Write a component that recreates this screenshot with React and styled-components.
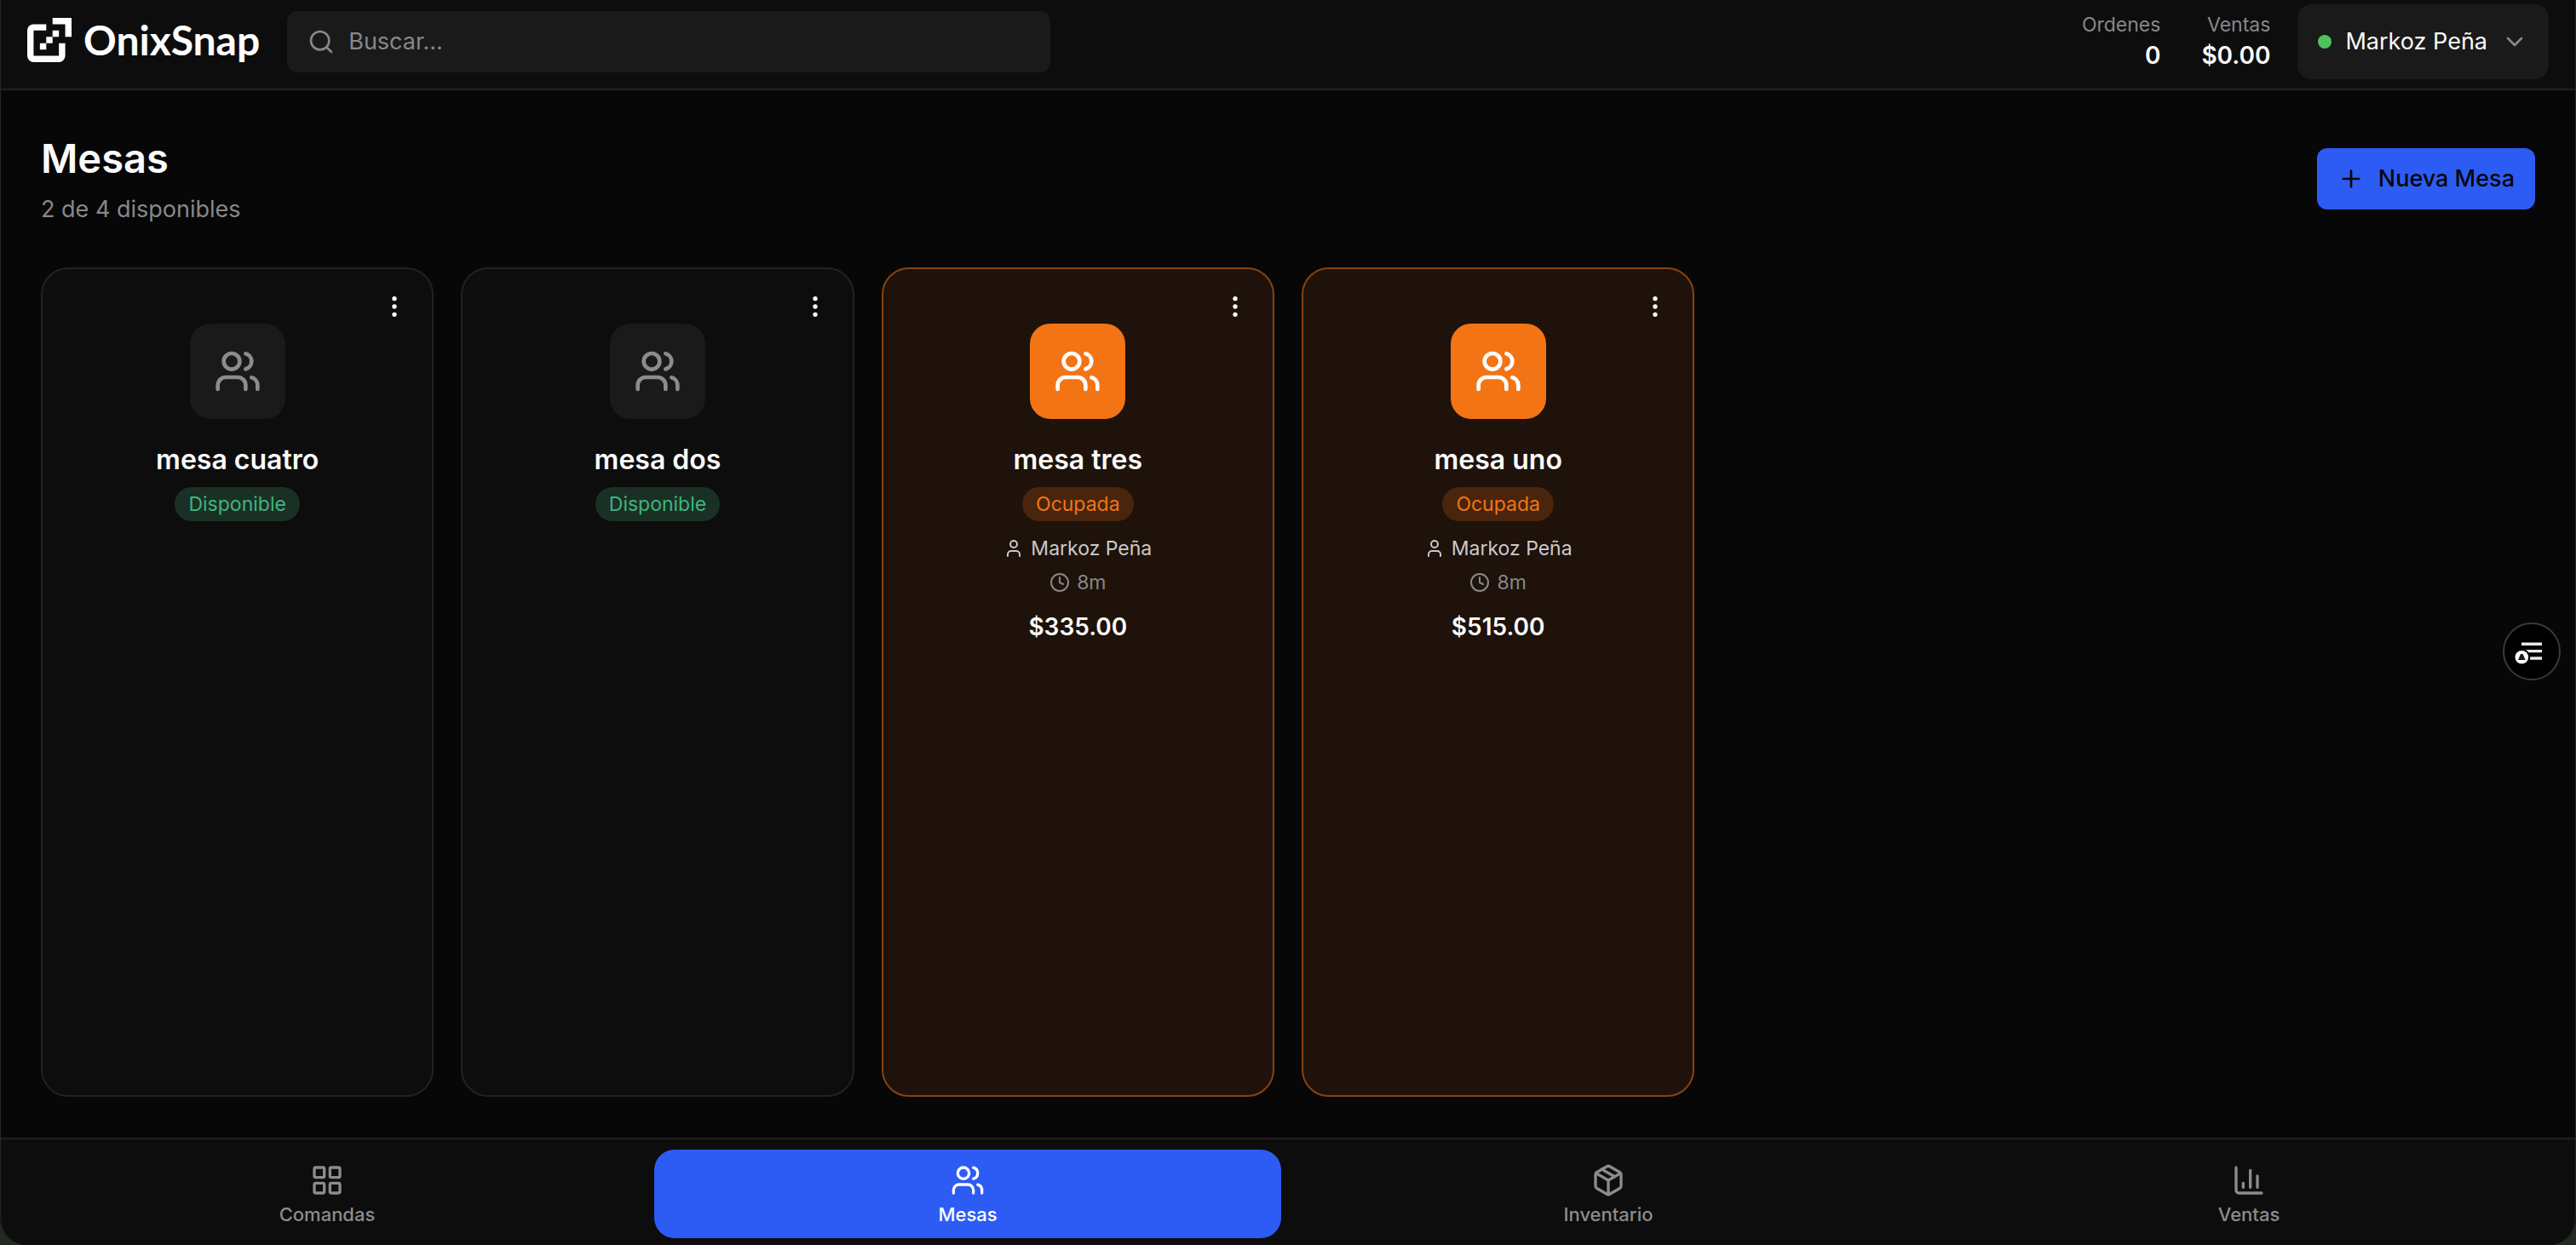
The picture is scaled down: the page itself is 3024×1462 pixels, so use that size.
import React from "react";
import styled, { createGlobalStyle } from "styled-components";
import {
  ChartColumn,
  ChevronDown,
  Clock,
  EllipsisVertical,
  LayoutGrid,
  Package,
  Plus,
  Search,
  User,
  Users,
} from "lucide-react";

const tables = [
  { name: "mesa cuatro" },
  { name: "mesa dos" },
  { name: "mesa tres", waiter: "Markoz Peña", time: "8m", total: "$335.00" },
  { name: "mesa uno", waiter: "Markoz Peña", time: "8m", total: "$515.00" },
];

const sections = [
  { label: "Comandas", icon: LayoutGrid },
  { label: "Mesas", icon: Users, active: true },
  { label: "Inventario", icon: Package },
  { label: "Ventas", icon: ChartColumn },
];

const Logo = () => (
  <Brand href="#">
    <svg width="52" height="52" viewBox="0 0 7 7" fill="white" aria-hidden="true">
      <path d="M1 1H3V2H1V6H5V4H6V6A1 1 0 0 1 5 7H1A1 1 0 0 1 0 6V2A1 1 0 0 1 1 1Z" />
      <path d="M4 0H7V3H6V1H4Z" />
      <path d="M4 2H5V3H4ZM3 3H4V4H3ZM2 4H3V5H2Z" />
    </svg>
    <span>OnixSnap</span>
  </Brand>
);

const TableCard = ({ name, waiter, time, total }) => {
  const busy = Boolean(waiter);
  return (
    <Card $busy={busy}>
      <MenuButton aria-label={`Opciones de ${name}`}>
        <EllipsisVertical size={32} />
      </MenuButton>
      <IconTile $busy={busy}>
        <Users size={56} />
      </IconTile>
      <CardName>{name}</CardName>
      <Badge $busy={busy}>{busy ? "Ocupada" : "Disponible"}</Badge>
      {busy && (
        <>
          <Details>
            <Detail $color="#cacaca">
              <User size={24} />
              {waiter}
            </Detail>
            <Detail $color="#888888">
              <Clock size={24} />
              {time}
            </Detail>
          </Details>
          <Total>{total}</Total>
        </>
      )}
    </Card>
  );
};

const App = () => (
  <Shell>
    <GlobalStyle />
    <Header>
      <Logo />
      <SearchBox>
        <Search size={32} />
        <input type="text" placeholder="Buscar..." aria-label="Buscar" />
      </SearchBox>
      <HeaderRight>
        <Stat>
          <span>Ordenes</span>
          <strong>0</strong>
        </Stat>
        <Stat>
          <span>Ventas</span>
          <strong>$0.00</strong>
        </Stat>
        <UserButton>
          <StatusDot />
          Markoz Peña
          <ChevronDown size={32} />
        </UserButton>
      </HeaderRight>
    </Header>
    <Main>
      <TitleRow>
        <div>
          <Title>Mesas</Title>
          <Subtitle>2 de 4 disponibles</Subtitle>
        </div>
        <NewButton>
          <Plus size={32} />
          Nueva Mesa
        </NewButton>
      </TitleRow>
      <Grid>
        {tables.map((table) => (
          <TableCard key={table.name} {...table} />
        ))}
      </Grid>
    </Main>
    <Nav>
      {sections.map(({ label, icon: Icon, active }) => (
        <NavItem key={label} href="#" $active={active}>
          <Icon size={40} />
          {label}
        </NavItem>
      ))}
    </Nav>
    <FloatingButton aria-label="Abrir panel">
      <svg width="64" height="64" viewBox="2 2 64 64" aria-hidden="true">
        <path
          d="M22 25.2H46M27 33.6H46M32 42H46"
          stroke="#e8eaea"
          strokeWidth="3.4"
        />
        <circle cx="22.3" cy="40.7" r="10" fill="black" />
        <circle cx="22.3" cy="40.7" r="7.8" fill="white" />
        <path d="M21 37h2.6l3 7h-8.6z" fill="#1c1c1c" />
      </svg>
    </FloatingButton>
  </Shell>
);

const GlobalStyle = createGlobalStyle`
  * {
    box-sizing: border-box;
  }

  body {
    margin: 0;
    background: #222a22;
    color: #fafafa;
    font-family: Inter, "Liberation Sans", sans-serif;
    font-size: 27px;
    line-height: 40px;
  }

  button,
  input {
    font: inherit;
    color: inherit;
    border: none;
  }

  button {
    cursor: pointer;
  }

  a {
    color: inherit;
    text-decoration: none;
  }

  h1,
  h2,
  p {
    margin: 0;
  }

  svg {
    flex-shrink: 0;
  }
`;

const Shell = styled.div`
  position: relative;
  display: flex;
  flex-direction: column;
  min-height: 100vh;
  background: #070707;
  border-radius: 0 0 32px 32px;
  overflow: hidden;

  /* window frame drawn over the bars */
  &::after {
    content: "";
    position: absolute;
    inset: 0;
    border: 1px solid #262626;
    border-width: 0 1px;
    border-radius: inherit;
    pointer-events: none;
  }
`;

const Header = styled.header`
  display: flex;
  align-items: center;
  gap: 32px;
  padding: 5px 32px 11px;
  background: #0d0d0d;
  border-bottom: 2px solid #222222;
`;

const Brand = styled.a`
  display: flex;
  align-items: center;
  gap: 14px;
  padding-bottom: 4px;
  font-family: Lato, sans-serif;
  font-size: 48px;
  font-weight: 700;
  line-height: 56px;
  color: white;
`;

const SearchBox = styled.label`
  display: flex;
  flex: 0 1 896px;
  align-items: center;
  gap: 16px;
  height: 72px;
  padding: 0 24px;
  border-radius: 12px;
  background: #1a1a1a;
  color: #888888;

  input {
    flex: 1;
    min-width: 0;
    padding: 0;
    background: transparent;
    color: #fafafa;
    outline: none;
  }

  input::placeholder {
    color: #888888;
    opacity: 1;
  }
`;

const HeaderRight = styled.div`
  display: flex;
  align-items: center;
  gap: 48px;
  margin-left: auto;
`;

const Stat = styled.div`
  display: flex;
  flex-direction: column;
  align-items: flex-end;

  span {
    font-size: 23px;
    line-height: 32px;
    color: #888888;
  }

  strong {
    font-size: 28px;
    font-weight: 600;
  }
`;

const UserButton = styled.button`
  display: flex;
  align-items: center;
  gap: 16px;
  height: 88px;
  margin-left: -16px;
  padding: 0 24px;
  border-radius: 16px;
  background: #1a1a1a;

  svg {
    color: #888888;
  }
`;

const StatusDot = styled.span`
  width: 16px;
  height: 16px;
  border-radius: 50%;
  background: #4fc25f;
`;

const Main = styled.main`
  display: flex;
  flex: 1;
  flex-direction: column;
  gap: 48px;
  padding: 48px;
`;

const TitleRow = styled.div`
  display: flex;
  align-items: center;
  justify-content: space-between;
`;

const Title = styled.h1`
  font-size: 47px;
  font-weight: 600;
  line-height: 64px;
`;

const Subtitle = styled.p`
  margin-top: 8px;
  color: #888888;
`;

const NewButton = styled.button`
  display: flex;
  align-items: center;
  gap: 16px;
  height: 72px;
  padding: 0 24px;
  border-radius: 12px;
  background: #2c5cf4;
  color: #070707;
  font-weight: 500;
`;

const Grid = styled.div`
  display: grid;
  flex: 1;
  grid-template-columns: repeat(6, minmax(0, 1fr));
  gap: 32px;
`;

const Card = styled.article`
  position: relative;
  display: flex;
  flex-direction: column;
  align-items: center;
  padding: 64px 32px;
  border: 2px solid ${({ $busy }) => ($busy ? "#88430f" : "#222222")};
  border-radius: 32px;
  background: ${({ $busy }) => ($busy ? "#1e120a" : "#0d0d0d")};
`;

const MenuButton = styled.button`
  position: absolute;
  top: 16px;
  right: 16px;
  display: grid;
  place-items: center;
  width: 56px;
  height: 56px;
  padding: 0;
  background: transparent;
`;

const IconTile = styled.div`
  display: grid;
  place-items: center;
  width: 112px;
  height: 112px;
  border-radius: 24px;
  background: ${({ $busy }) => ($busy ? "#f37415" : "#1a1a1a")};
  color: ${({ $busy }) => ($busy ? "#ffffff" : "#8c8c8c")};
`;

const CardName = styled.h2`
  margin-top: 24px;
  font-size: 32px;
  font-weight: 600;
  line-height: 48px;
`;

const Badge = styled.span`
  margin-top: 8px;
  padding: 4px 16px;
  border-radius: 20px;
  background: ${({ $busy }) => ($busy ? "#48250c" : "#1a3025")};
  color: ${({ $busy }) => ($busy ? "#f37415" : "#3fb57e")};
  font-size: 23px;
  line-height: 32px;
`;

const Details = styled.div`
  display: flex;
  flex-direction: column;
  align-items: center;
  gap: 8px;
  margin: 16px 0;
`;

const Detail = styled.p`
  display: flex;
  align-items: center;
  gap: 8px;
  color: ${({ $color }) => $color};
  font-size: 23px;
  line-height: 32px;
`;

const Total = styled.p`
  font-size: 28px;
  font-weight: 600;
`;

const Nav = styled.nav`
  display: grid;
  grid-template-columns: repeat(4, 1fr);
  gap: 16px;
  padding: 12px 16px 8px;
  background: #0d0d0d;
  border-top: 2px solid #222222;
`;

const NavItem = styled.a`
  display: flex;
  flex-direction: column;
  align-items: center;
  gap: 4px;
  padding: 16px 0 12px;
  border-radius: 24px;
  background: ${({ $active }) => ($active ? "#2c5cf4" : "transparent")};
  color: ${({ $active }) => ($active ? "#ffffff" : "#8c8c8c")};
  font-size: 22px;
  font-weight: 500;
  line-height: 32px;
`;

const FloatingButton = styled.button`
  position: fixed;
  top: 50%;
  right: 18px;
  width: 68px;
  height: 68px;
  padding: 0;
  border: 2px solid #3a3a3a;
  border-radius: 50%;
  background: black;

  svg {
    display: block;
  }
`;

export default App;
